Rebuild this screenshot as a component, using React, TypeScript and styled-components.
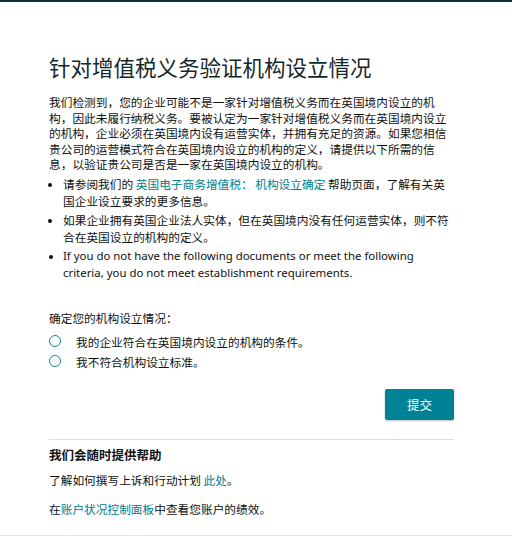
import React from "react";
import styled, { createGlobalStyle } from "styled-components";

const GlobalStyle = createGlobalStyle`
  body {
    margin: 0;
    background: #ffffff;
    font-family: "Noto Sans CJK SC", "Noto Sans", sans-serif;
    color: #0f1111;
  }
`;

const Page = styled.div`
  border-top: 2px solid #0d3236;
  min-height: 549px;
  display: flex;
  flex-direction: column;
`;

const Content = styled.main`
  width: 405px;
  padding: 0 0 0 49px;
  display: flex;
  flex-direction: column;
`;

const Title = styled.h1`
  margin: 50px 0 0;
  font-size: 21.5px;
  line-height: 30px;
  font-weight: 400;
  color: #16272a;
`;

const Text = styled.p<{ $top?: number }>`
  margin: ${(p) => p.$top ?? 0}px 0 0;
  font-size: 11.7px;
  line-height: 15.5px;
`;

const List = styled.ul`
  margin: 3px 0 0;
  padding: 0 0 0 14px;
  font-size: 11.7px;
  line-height: 17px;
`;

const Item = styled.li<{ $latin?: boolean }>`
  margin: ${(p) => (p.$latin ? "-1px 0 0" : "0 0 2.5px")};
  font-family: ${(p) =>
    p.$latin
      ? `"Noto Sans", sans-serif`
      : `"Noto Sans CJK SC", "Noto Sans", sans-serif`};
  font-size: ${(p) => (p.$latin ? "11.4px" : "11.7px")};
  &::marker {
    font-size: 10px;
  }
`;

const Link = styled.a`
  color: #007c8c;
  text-decoration: none;
  cursor: pointer;
`;

const Question = styled.div`
  margin-top: 28px;
  font-size: 11.7px;
  line-height: 17px;
`;

const Options = styled.div`
  margin-top: 7px;
  display: flex;
  flex-direction: column;
  gap: 3px;
`;

const Option = styled.label`
  display: flex;
  align-items: center;
  gap: 15px;
  font-size: 11.7px;
  line-height: 17px;
  cursor: pointer;
`;

const Radio = styled.span`
  width: 10px;
  height: 10px;
  border: 1.5px solid #1b8593;
  border-radius: 50%;
  flex: none;
`;

const Actions = styled.div`
  margin-top: 19px;
  display: flex;
  justify-content: flex-end;
`;

const Button = styled.button`
  width: 69px;
  height: 31px;
  border: none;
  border-radius: 2px;
  background: #008296;
  color: #ffffff;
  font-family: "Noto Sans CJK SC", sans-serif;
  font-size: 12.5px;
  box-shadow: 0 1px 2px rgba(0, 0, 0, 0.25);
  cursor: pointer;
`;

const Divider = styled.hr`
  margin: 19px 0 0;
  border: none;
  border-top: 1px solid #dddddd;
`;

const HelpTitle = styled.h2`
  margin: 6px 0 0;
  font-size: 12.5px;
  line-height: 17px;
  font-weight: 700;
`;

const Footer = styled.footer`
  margin-top: 18px;
  border-top: 1px solid #e3e3e3;
`;

export default function App() {
  return (
    <>
      <GlobalStyle />
      <Page>
        <Content>
          <Title>针对增值税义务验证机构设立情况</Title>
          <Text $top={12}>
            我们检测到，您的企业可能不是一家针对增值税义务而在英国境内设立的机构，因此未履行纳税义务。要被认定为一家针对增值税义务而在英国境内设立的机构，企业必须在英国境内设有运营实体，并拥有充足的资源。如果您相信贵公司的运营模式符合在英国境内设立的机构的定义，请提供以下所需的信息，以验证贵公司是否是一家在英国境内设立的机构。
          </Text>
          <List>
            <Item>
              请参阅我们的 <Link>英国电子商务增值税： 机构设立确定</Link>{" "}
              帮助页面，了解有关英国企业设立要求的更多信息。
            </Item>
            <Item>
              如果企业拥有英国企业法人实体，但在英国境内没有任何运营实体，则不符合在英国设立的机构的定义。
            </Item>
            <Item $latin>
              If you do not have the following documents or meet the following
              criteria, you do not meet establishment requirements.
            </Item>
          </List>
          <Question>确定您的机构设立情况：</Question>
          <Options>
            <Option>
              <Radio />
              我的企业符合在英国境内设立的机构的条件。
            </Option>
            <Option>
              <Radio />
              我不符合机构设立标准。
            </Option>
          </Options>
          <Actions>
            <Button>提交</Button>
          </Actions>
          <Divider />
          <HelpTitle>我们会随时提供帮助</HelpTitle>
          <Text $top={9}>
            了解如何撰写上诉和行动计划 <Link>此处</Link>。
          </Text>
          <Text $top={14}>
            在<Link>账户状况控制面板</Link>中查看您账户的绩效。
          </Text>
        </Content>
        <Footer />
      </Page>
    </>
  );
}
